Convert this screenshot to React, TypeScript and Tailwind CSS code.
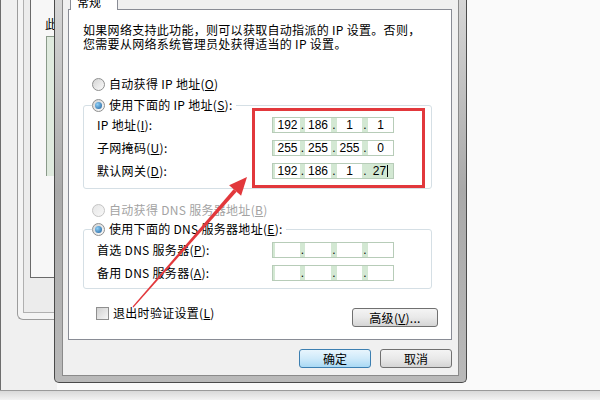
import React from "react";

const Radio = ({ checked, disabled }: { checked?: boolean; disabled?: boolean }) => (
  <span
    className={
      disabled
        ? "w-[13px] h-[13px] shrink-0 rounded-full border border-[#c4c4c4] bg-linear-to-br from-[#e6e6e6] to-[#f8f8f8] flex items-center justify-center"
        : "w-[13px] h-[13px] shrink-0 rounded-full border border-[#8e8f8f] bg-linear-to-br from-[#d4d4d4] to-[#fbfbfb] flex items-center justify-center"
    }
  >
    {checked && (
      <span className="w-[7px] h-[7px] rounded-full bg-[radial-gradient(circle_at_35%_35%,#8fd0f8,#1d5d99)]" />
    )}
  </span>
);

const Key = ({ k }: { k: string }) => (
  <span>
    (<span className="underline">{k}</span>)
  </span>
);

const IpBox = ({ vals, active }: { vals: string[]; active?: boolean }) => {
  const widths = ["w-[25px]", "w-[26px]", "w-[25px]", "w-[25px]"];
  const seps = ["w-[5px]", "w-[6px]", "w-[6px]"];
  return (
    <div className="w-[122px] h-[16px] border border-[#b7ccb8] bg-[#d3e8d3] flex pl-[2px] font-['Liberation_Sans',sans-serif] text-[12px] leading-[14px] tracking-normal">
      {vals.map((v, i) => (
        <React.Fragment key={i}>
          <div
            className={
              active && i === 3
                ? `${widths[i]} flex items-center justify-center`
                : `${widths[i]} bg-white flex items-center justify-center`
            }
          >
            {v}
            {active && i === 3 && <span className="ml-[1px] w-px h-[12px] bg-black" />}
          </div>
          {i < 3 && <div className={`${seps[i]} text-center`}>.</div>}
        </React.Fragment>
      ))}
    </div>
  );
};

const Row = ({ label, vals, active }: { label: React.ReactNode; vals: string[]; active?: boolean }) => (
  <div className="flex items-center h-[16px]">
    <div className="w-[175px] leading-[14px]">{label}</div>
    <IpBox vals={vals} active={active} />
  </div>
);

const Btn = ({ children, primary, w }: { children: React.ReactNode; primary?: boolean; w: string }) => (
  <div
    className={
      primary
        ? `${w} h-[19px] rounded-[3px] border border-[#3c7fb1] bg-linear-to-b from-[#e8f5fd] via-[#cfeafa] to-[#a9d9f4] flex items-center justify-center leading-[14px]`
        : `${w} h-[19px] rounded-[3px] border border-[#707070] bg-linear-to-b from-[#f4f4f4] via-[#e9e9e9] to-[#d5d5d5] flex items-center justify-center leading-[14px]`
    }
  >
    {children}
  </div>
);

const LeftStrip = () => (
  <div className="w-[54px] h-full flex shrink-0">
    <div className="w-[3px] bg-[#f4f4f4]" />
    <div className="flex-1 border-l border-[#6e6e6e] bg-[#f0f0f0] pl-[16px]">
      <div className="h-[320px] border-l border-b border-[#9c9c9c] rounded-bl-[6px] bg-[#f4f4f4] pl-[5px]">
        <div className="h-[313px] border-l border-b border-[#b0b0b0] bg-[#ececec] pl-[6px]">
          <div className="h-[278px] border-l border-b border-[#6a6a6a] bg-[#f7f7f7] pl-[14px] overflow-hidden">
            <div className="mt-[17px] leading-[13px] whitespace-nowrap">此</div>
            <div className="mt-[6px] ml-[1px] h-[140px] border-l border-t border-[#8a9a8a] bg-[#dfeade]" />
          </div>
        </div>
      </div>
    </div>
  </div>
);

const Dialog = () => (
  <div className="w-[413px] h-[383px] shrink-0 border-l border-r border-b border-[#4a4a4a] rounded-b-[5px] bg-linear-to-b from-[#d6d6d6] via-[#a9a9a9] to-[#b9b9b9] px-[7px] pb-[6px] flex">
    <div className="flex-1 border-l border-r border-b border-[#8a8a8a] bg-[#f0f0f0] pl-[5px] pr-[6px] flex flex-col">
      <div className="h-[9px] flex">
        <div className="ml-[2px] w-[48px] h-[10px] relative z-10 border-l border-r border-[#898c95] bg-white overflow-hidden pl-[6px]">
          <div className="-mt-[5px] leading-[13px]">常规</div>
        </div>
      </div>
      <div className="h-[331px] border border-[#898c95] bg-white pl-[14px] pr-[19px] pt-[13px] flex flex-col tracking-[0.3px]">
        <div className="leading-[14px] whitespace-nowrap">
          <div>如果网络支持此功能，则可以获取自动指派的 IP 设置。否则，</div>
          <div>您需要从网络系统管理员处获得适当的 IP 设置。</div>
        </div>

        <div className="mt-[26px] ml-[9px] h-[14px] flex items-center gap-[4px] leading-[14px]">
          <Radio />
          <span>
            自动获得 IP 地址<Key k="O" />
          </span>
        </div>

        <div className="mt-[14px] border border-[#d5dfe5] rounded-[3px] pb-[9px]">
          <div className="-mt-[8px] ml-[8px] w-fit h-[14px] bg-white pr-[3px] flex items-center gap-[4px] leading-[14px]">
            <Radio checked />
            <span>
              使用下面的 IP 地址<Key k="S" />:
            </span>
          </div>
          <div className="mt-[5px] pl-[13px] flex flex-col gap-[7px]">
            <Row label={<>IP 地址<Key k="I" />:</>} vals={["192", "186", "1", "1"]} />
            <Row label={<>子网掩码<Key k="U" />:</>} vals={["255", "255", "255", "0"]} />
            <Row label={<>默认网关<Key k="D" />:</>} vals={["192", "186", "1", "27"]} active />
          </div>
        </div>

        <div className="mt-[14px] ml-[9px] h-[14px] flex items-center gap-[4px] leading-[14px] text-[#a3a3a3]">
          <Radio disabled />
          <span>
            自动获得 DNS 服务器地址<Key k="B" />
          </span>
        </div>

        <div className="mt-[12px] border border-[#d5dfe5] rounded-[3px] pb-[7px]">
          <div className="-mt-[8px] ml-[8px] w-fit h-[14px] bg-white pr-[3px] flex items-center gap-[4px] leading-[14px]">
            <Radio checked />
            <span>
              使用下面的 DNS 服务器地址<Key k="E" />:
            </span>
          </div>
          <div className="mt-[6px] pl-[13px] flex flex-col gap-[7px]">
            <Row label={<>首选 DNS 服务器<Key k="P" />:</>} vals={["", "", "", ""]} />
            <Row label={<>备用 DNS 服务器<Key k="A" />:</>} vals={["", "", "", ""]} />
          </div>
        </div>

        <div className="mt-[17px] flex items-start justify-between">
          <div className="ml-[13px] h-[14px] flex items-center gap-[4px] leading-[14px]">
            <span className="w-[13px] h-[13px] border border-[#8f8f8f] bg-linear-to-br from-[#d0d0d0] to-[#f6f6f6]" />
            <span>
              退出时验证设置<Key k="L" />
            </span>
          </div>
          <div className="mt-[2px] -mr-[6px]">
            <Btn w="w-[86px]">
              高级<Key k="V" />...
            </Btn>
          </div>
        </div>
      </div>

      <div className="mt-[9px] flex justify-end gap-[9px]">
        <Btn primary w="w-[72px]">确定</Btn>
        <Btn w="w-[72px]">取消</Btn>
      </div>
    </div>
  </div>
);

export default function App() {
  return (
    <div className="w-[600px] h-[400px] relative overflow-hidden bg-[#fafafa] flex flex-col text-[12px] text-black font-['Noto_Sans_CJK_SC','Noto_Sans',sans-serif]">
      <div className="h-[390px] flex">
        <LeftStrip />
        <Dialog />
        <div className="flex-1" />
      </div>
      <div className="h-[10px] border-t border-[#9a9a9a] bg-linear-to-b from-[#d9d9d9] to-[#f3f3f3]" />

      <div className="absolute left-[252px] top-[108px] w-[173px] h-[80px] border-[3px] border-[#e2383c] pointer-events-none" />

      <svg
        className="absolute left-0 top-0 pointer-events-none"
        width="600"
        height="400"
        viewBox="0 0 600 400"
      >
        <polygon
          points="133.4,307.4 132.6,306.6 233.6,189.2 236.6,191.8"
          fill="#e2383c"
        />
        <polygon points="247,177 241.1,195.8 229.1,185.2" fill="#e2383c" />
      </svg>
    </div>
  );
}
